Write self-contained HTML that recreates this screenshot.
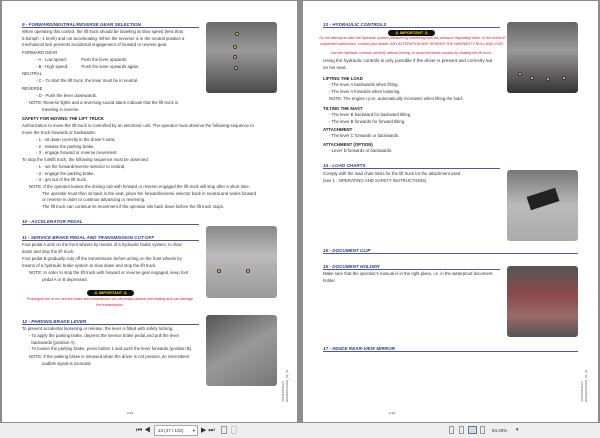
<!DOCTYPE html>
<html><head><meta charset="utf-8"><style>
*{margin:0;padding:0;box-sizing:border-box}
body{width:600px;height:438px;background:#8c8c8c;position:relative;overflow:hidden;font-family:"Liberation Sans",sans-serif;color:#333}
.pg{position:absolute;top:1px;height:421px;background:#fff}
.t{position:absolute;font-size:4.3px;line-height:6.6px;white-space:nowrap;color:#333}
.h{position:absolute;font-size:4.6px;font-weight:bold;font-style:italic;color:#2b3f8c;border-bottom:0.8px solid #4a5a9a;line-height:5.5px;height:6px}
.b{font-weight:bold;color:#222}
.r{color:#c4202e;font-size:3.6px}
.ph{position:absolute;border-radius:3px;background:linear-gradient(160deg,#777,#aaa 45%,#555)}
.imp{position:absolute;height:6px;width:47px;border-radius:3px;background:#111;color:#f5d000;font-size:4px;font-weight:bold;text-align:center;line-height:6px}
.dot{position:absolute;width:4px;height:4px;border-radius:50%;background:#f0e020;border:0.5px solid #333}
.tb{position:absolute;left:0;top:423px;width:600px;height:15px;background:#eeeeee}
.vt{position:absolute;font-size:3px;color:#555;transform:rotate(-90deg);transform-origin:left top;white-space:nowrap}
</style></head><body>
<div class="pg" style="left:2px;width:295px"></div>
<div class="pg" style="left:303px;width:295px"></div>

<!-- LEFT PAGE -->
<div class="h" style="left:22px;top:22px;width:177px">9 - FORWARD/NEUTRAL/REVERSE GEAR SELECTION</div>
<div class="ph" style="left:206px;top:22px;width:71px;height:71px;background:linear-gradient(180deg,#6a6a6a,#9a9a9a 40%,#4a4a4a)"></div>
<div class="dot" style="left:235px;top:32px"></div><div class="dot" style="left:233px;top:45px"></div><div class="dot" style="left:233px;top:55px"></div><div class="dot" style="left:234px;top:66px"></div>
<div class="t" style="left:22px;top:29px">When operating this control, the lift truck should be traveling at slow speed (less than<br>0.62mph - 1 km/h) and not accelerating. When the reverser is in the neutral position a<br>mechanical lock prevents accidental engagement of forward or reverse gear.</div>
<div class="t" style="left:22px;top:50px">FORWARD GEAR</div>
<div class="t" style="left:36px;top:57px">- A - Low speed:&nbsp;&nbsp;&nbsp;&nbsp;&nbsp;&nbsp;&nbsp;&nbsp;&nbsp;&nbsp;&nbsp;&nbsp;Push the lever upwards.<br>- B - High speed:&nbsp;&nbsp;&nbsp;&nbsp;&nbsp;&nbsp;&nbsp;&nbsp;&nbsp;&nbsp;&nbsp;Push the lever upwards again.</div>
<div class="t" style="left:22px;top:71px">NEUTRAL</div>
<div class="t" style="left:36px;top:78px">- C - To start the lift truck, the lever must be in neutral.</div>
<div class="t" style="left:22px;top:86px">REVERSE</div>
<div class="t" style="left:36px;top:93px">- D - Push the lever downwards.</div>
<div class="t" style="left:29px;top:100px">NOTE: Reverse lights and a reversing sound alarm indicate that the lift truck is<br>&nbsp;&nbsp;&nbsp;&nbsp;&nbsp;&nbsp;&nbsp;&nbsp;&nbsp;&nbsp;&nbsp;traveling in reverse.</div>
<div class="t b" style="left:22px;top:116px">SAFETY FOR MOVING THE LIFT TRUCK</div>
<div class="t" style="left:22px;top:123px">Authorization to move the lift truck is controlled by an electronic unit. The operator must observe the following sequence to<br>move the truck forwards or backwards:</div>
<div class="t" style="left:36px;top:137px">- 1 - sit down correctly in the driver's seat,<br>- 2 - release the parking brake,<br>- 3 - engage forward or reverse movement.</div>
<div class="t" style="left:22px;top:157px">To stop the forklift truck, the following sequence must be observed:</div>
<div class="t" style="left:36px;top:164px">- 1 - set the forward/reverse selector to neutral,<br>- 2 - engage the parking brake,<br>- 3 - get out of the lift truck.</div>
<div class="t" style="left:29px;top:184px">NOTE: If the operator leaves the driving cab with forward or reverse engaged the lift truck will stop after a short time.<br>&nbsp;&nbsp;&nbsp;&nbsp;&nbsp;&nbsp;&nbsp;&nbsp;&nbsp;&nbsp;&nbsp;The operator must then sit back in the seat, place the forward/reverse selector back in neutral and select forward<br>&nbsp;&nbsp;&nbsp;&nbsp;&nbsp;&nbsp;&nbsp;&nbsp;&nbsp;&nbsp;&nbsp;or reverse in order to continue advancing or reversing.<br>&nbsp;&nbsp;&nbsp;&nbsp;&nbsp;&nbsp;&nbsp;&nbsp;&nbsp;&nbsp;&nbsp;The lift truck can continue its movement if the operator sits back down before the lift truck stops.</div>

<div class="h" style="left:22px;top:219px;width:177px">10 - ACCELERATOR PEDAL</div>
<div class="ph" style="left:206px;top:226px;width:71px;height:72px;background:linear-gradient(180deg,#888,#bbb 40%,#999)"></div>
<div class="dot" style="left:217px;top:269px"></div><div class="dot" style="left:246px;top:269px"></div>
<div class="h" style="left:22px;top:235px;width:177px">11 - SERVICE BRAKE PEDAL AND TRANSMISSION CUT-OFF</div>
<div class="t" style="left:22px;top:242px">Foot pedal A acts on the front wheels by means of a hydraulic brake system, to slow<br>down and stop the lift truck.</div>
<div class="t" style="left:22px;top:256px">Foot pedal B gradually cuts off the transmission before acting on the front wheels by<br>means of a hydraulic brake system to slow down and stop the lift truck.</div>
<div class="t" style="left:29px;top:270px">NOTE: In order to stop the lift truck with forward or reverse gear engaged, keep foot<br>&nbsp;&nbsp;&nbsp;&nbsp;&nbsp;&nbsp;&nbsp;&nbsp;&nbsp;&nbsp;&nbsp;pedal A or B depressed.</div>
<div class="imp" style="left:87px;top:290px">⚠ IMPORTANT ⚠</div>
<div class="t r" style="left:26px;top:297px;width:168px;text-align:center;line-height:5.5px;white-space:normal">Prolonged use of the service brake and transmission cut-off pedals causes overheating and can damage the transmission.</div>
<div class="h" style="left:22px;top:319px;width:177px">12 - PARKING BRAKE LEVER</div>
<div class="ph" style="left:206px;top:315px;width:71px;height:71px;background:linear-gradient(150deg,#555,#999 50%,#777)"></div>
<div class="t" style="left:22px;top:326px">To prevent accidental loosening or release, the lever is fitted with safety locking.</div>
<div class="t" style="left:29px;top:333px">- To apply the parking brake, depress the service brake pedal and pull the lever<br>&nbsp;&nbsp;backwards (position A).<br>- To loosen the parking brake, press button 1 and push the lever forwards (position B).</div>
<div class="t" style="left:29px;top:354px">NOTE: If the parking brake is released when the driver is not present, an intermittent<br>&nbsp;&nbsp;&nbsp;&nbsp;&nbsp;&nbsp;&nbsp;&nbsp;&nbsp;&nbsp;&nbsp;audible signal is sounded.</div>
<div class="vt" style="left:281px;top:402px">4700156691EN<br>RONEW2301EN_02_01</div>
<div class="t" style="left:127px;top:410px;font-size:3px">2-23</div>

<!-- RIGHT PAGE -->
<div class="h" style="left:323px;top:22px;width:177px">13 - HYDRAULIC CONTROLS</div>
<div class="imp" style="left:388px;top:30px">⚠ IMPORTANT ⚠</div>
<div class="t r" style="left:318px;top:36px;width:188px;text-align:center;line-height:5.5px;white-space:normal;font-style:italic">Do not attempt to alter the hydraulic system pressure by interfering with the pressure regulating valve. In the event of suspected malfunction, contact your dealer. ANY ALTERATION MAY RENDER THE WARRANTY NULL AND VOID.</div>
<div class="t r" style="left:321px;top:50px;width:180px;text-align:center;font-style:italic">Use the hydraulic controls carefully without jerking, to avoid accidents caused by shaking the lift truck.</div>
<div class="ph" style="left:507px;top:22px;width:71px;height:71px;background:linear-gradient(180deg,#666,#999 40%,#333)"></div>
<div class="dot" style="left:518px;top:72px"></div><div class="dot" style="left:530px;top:76px"></div><div class="dot" style="left:546px;top:77px"></div><div class="dot" style="left:562px;top:76px"></div>
<div class="t" style="left:323px;top:58px;font-size:4.6px">Using the hydraulic controls is only possible if the driver is present and correctly sat<br>on his seat.</div>
<div class="t b" style="left:323px;top:76px">LIFTING THE LOAD</div>
<div class="t" style="left:329px;top:82px">- The lever A backwards when lifting.<br>- The lever A forwards when lowering.</div>
<div class="t" style="left:329px;top:96px">NOTE: The engine r.p.m. automatically increases when lifting the load.</div>
<div class="t b" style="left:323px;top:106px">TILTING THE MAST</div>
<div class="t" style="left:329px;top:112px">- The lever B backward for backward tilting.<br>- The lever B forwards for forward tilting.</div>
<div class="t b" style="left:323px;top:127px">ATTACHMENT</div>
<div class="t" style="left:329px;top:133px">- The lever C forwards or backwards.</div>
<div class="t b" style="left:323px;top:142px">ATTACHMENT (OPTION)</div>
<div class="t" style="left:329px;top:148px">- Lever D forwards or backwards.</div>
<div class="h" style="left:323px;top:163px;width:177px">14 - LOAD CHARTS</div>
<div class="t" style="left:323px;top:171px">Comply with the load chart limits for the lift truck for the attachment used<br>(see 1 - OPERATING AND SAFETY INSTRUCTIONS)</div>
<div class="ph" style="left:507px;top:170px;width:71px;height:71px;background:linear-gradient(180deg,#777,#bbb 50%,#aaa)"></div>
<div style="position:absolute;left:528px;top:192px;width:30px;height:14px;background:#222;transform:rotate(-18deg)"></div>
<div class="h" style="left:323px;top:248px;width:255px">15 - DOCUMENT CLIP</div>
<div class="h" style="left:323px;top:264px;width:177px">16 - DOCUMENT HOLDER</div>
<div class="t" style="left:323px;top:271px">Make sure that the operator's manual is in the right place, i.e. in the waterproof document<br>holder.</div>
<div class="ph" style="left:507px;top:266px;width:71px;height:71px;background:linear-gradient(180deg,#555,#8a4a4a 40%,#9a6a6a 70%,#555)"></div>
<div class="h" style="left:323px;top:346px;width:255px">17 - INSIDE REAR-VIEW MIRROR</div>
<div class="vt" style="left:580px;top:402px">4700156691EN<br>RONEW2301EN_02_01</div>
<div class="t" style="left:389px;top:410px;font-size:3px">2-24</div>

<!-- TOOLBAR -->
<div class="tb">
<div style="position:absolute;left:136px;top:3px;font-size:7px;color:#333;line-height:9px">⏮ ◀</div>
<div style="position:absolute;left:154px;top:2px;width:44px;height:11px;background:#fff;border:0.5px solid #aaa;font-size:4.5px;line-height:10px;padding-left:3px;color:#333">23 (47 / 102)<span style="position:absolute;right:2px">▾</span></div>
<div style="position:absolute;left:201px;top:3px;font-size:7px;color:#333;line-height:9px">▶ ⏭</div>
<div style="position:absolute;left:221px;top:3px;width:6px;height:8px;border:0.7px solid #999"></div>
<div style="position:absolute;left:231px;top:3px;width:6px;height:8px;border:0.7px solid #ccc"></div>
<div style="position:absolute;left:449px;top:3px;width:5px;height:8px;border:0.7px solid #999"></div>
<div style="position:absolute;left:459px;top:3px;width:5px;height:8px;border:0.7px solid #999"></div>
<div style="position:absolute;left:468px;top:3px;width:9px;height:8px;border:0.7px solid #678;background:#cde"></div>
<div style="position:absolute;left:480px;top:3px;width:5px;height:8px;border:0.7px solid #999"></div>
<div style="position:absolute;left:492px;top:3px;font-size:4.5px;color:#333;line-height:9px">84.40%</div>
<div style="position:absolute;left:516px;top:3px;font-size:5px;color:#333;line-height:9px">▾</div>
</div>
</body></html>
